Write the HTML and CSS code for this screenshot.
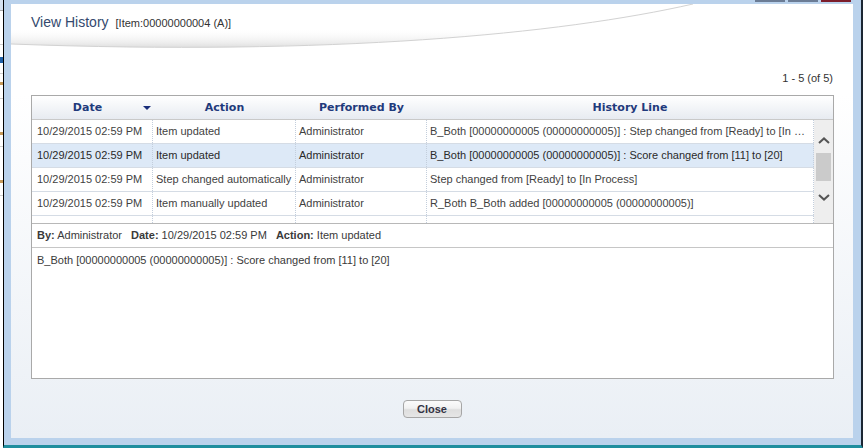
FILE: index.html
```html
<!DOCTYPE html>
<html lang="en">
<head>
<meta charset="utf-8">
<title>View History</title>
<link rel="stylesheet" href="styles.css">
</head>
<body>
<div class="screen">
  <div class="bgpage"></div>
  <div class="window">
    <div class="caption-btns"><span></span><span></span><span class="x"></span></div>
    <div class="dialog">
      <div class="dlg-header">
        <svg class="swoosh" viewBox="0 0 842 52" preserveAspectRatio="none" aria-hidden="true">
          <defs>
            <linearGradient id="sw" x1="0" y1="24" x2="0" y2="46" gradientUnits="userSpaceOnUse">
              <stop offset="0" stop-color="#ffffff" stop-opacity="0"/>
              <stop offset="1" stop-color="#d6d6d6"/>
            </linearGradient>
          </defs>
          <path d="M0,20 C220,26 420,22 550,0 L682,0 C550,30 320,52 0,40 Z" fill="url(#sw)"/>
          <path d="M0,40 C320,52 550,30 682,0" fill="none" stroke="#d2d2d2" stroke-width="1"/>
        </svg>
        <h1 class="title">View History<span class="sub">[Item:00000000004 (A)]</span></h1>
      </div>
      <div class="pager">1 - 5 (of 5)</div>
      <div class="grid">
        <div class="grid-head">
          <div class="hcell hdate">Date<span class="sort-arrow"></span></div>
          <div class="hcell">Action</div>
          <div class="hcell">Performed By</div>
          <div class="hcell">History Line</div>
        </div>
        <div class="grid-body">
          <div class="rows">
            <div class="row">
              <div class="cell c-date">10/29/2015 02:59 PM</div>
              <div class="cell">Item updated</div>
              <div class="cell">Administrator</div>
              <div class="cell">B_Both [00000000005 (00000000005)] : Step changed from [Ready] to [In Process]</div>
            </div>
            <div class="row selected">
              <div class="cell c-date">10/29/2015 02:59 PM</div>
              <div class="cell">Item updated</div>
              <div class="cell">Administrator</div>
              <div class="cell">B_Both [00000000005 (00000000005)] : Score changed from [11] to [20]</div>
            </div>
            <div class="row">
              <div class="cell c-date">10/29/2015 02:59 PM</div>
              <div class="cell">Step changed automatically</div>
              <div class="cell">Administrator</div>
              <div class="cell">Step changed from [Ready] to [In Process]</div>
            </div>
            <div class="row">
              <div class="cell c-date">10/29/2015 02:59 PM</div>
              <div class="cell">Item manually updated</div>
              <div class="cell">Administrator</div>
              <div class="cell">R_Both B_Both added [00000000005 (00000000005)]</div>
            </div>
            <div class="row partial">
              <div class="cell"></div>
              <div class="cell"></div>
              <div class="cell"></div>
              <div class="cell"></div>
            </div>
          </div>
          <div class="vscroll">
            <svg class="chev up" width="12" height="7" viewBox="0 0 12 7" aria-hidden="true"><path d="M1,6 L6,1.4 L11,6" fill="none" stroke="#555" stroke-width="2"/></svg>
            <div class="thumb"></div>
            <svg class="chev down" width="12" height="7" viewBox="0 0 12 7" aria-hidden="true"><path d="M1,1 L6,5.6 L11,1" fill="none" stroke="#555" stroke-width="2"/></svg>
          </div>
        </div>
        <div class="detail-bar">
          <span class="grp"><b>By:</b> Administrator</span>
          <span class="grp"><b>Date:</b> 10/29/2015 02:59 PM</span>
          <span class="grp"><b>Action:</b> Item updated</span>
        </div>
        <div class="detail-text">B_Both [00000000005 (00000000005)] : Score changed from [11] to [20]</div>
      </div>
      <div class="actions"><button class="btn" type="button">Close</button></div>
    </div>
  </div>
</div>
</body>
</html>
```

FILE: styles.css
```css
html, body {
  margin: 0;
  padding: 0;
  width: 863px;
  height: 448px;
  overflow: hidden;
}

body {
  background: #ffffff;
  font-family: "Liberation Sans", Arial, sans-serif;
  font-size: 11px;
  color: #3f3f3f;
}

.screen {
  display: flex;
  width: 863px;
  height: 448px;
}

.bgpage {
  width: 3px;
  flex: none;
  background:
    linear-gradient(#d6e2f0 0 10px, #a8a8a8 10px 11px, #ffffff 11px 44px, #d0d0d0 44px 45px,
      #ffffff 45px 57px, #1f5fa6 57px 63px, #ffffff 63px 73px, #d0d0d0 73px 74px,
      #ffffff 74px 82px, #c79a5a 82px 85px, #ffffff 85px 98px, #d0d0d0 98px 99px,
      #ffffff 99px 132px, #c79a5a 132px 135px, #ffffff 135px 146px, #d0d0d0 146px 147px,
      #ffffff 147px 180px, #c79a5a 180px 183px, #ffffff 183px 195px, #d0d0d0 195px 196px,
      #ffffff 196px 100%);
}

.window {
  position: relative;
  flex: 1;
  display: flex;
  flex-direction: column;
  border-left: 1px solid #000000;
  border-right: 2px solid #1b2633;
  border-bottom: 3px solid #1f8e9e;
  background: #bad2ec;
  padding: 4px 8px 7px 7px;
}

.caption-btns {
  position: absolute;
  top: 0;
  right: 10px;
  display: flex;
  gap: 3px;
}

.caption-btns span {
  width: 30px;
  height: 2px;
  background: #6b7c95;
}

.caption-btns .x {
  background: #7c1d2b;
}

.dialog {
  flex: 1;
  display: flex;
  flex-direction: column;
  background: linear-gradient(#ffffff 0, #ffffff 90px, #eaeff5 100%);
}

.dlg-header {
  position: relative;
  height: 52px;
  box-sizing: border-box;
  padding: 9px 20px 0;
}

.swoosh {
  position: absolute;
  left: 0;
  top: 0;
  width: 842px;
  height: 52px;
}

.title {
  position: relative;
  margin: 0;
  font-family: "Liberation Sans", Arial, sans-serif;
  font-weight: normal;
  font-size: 14px;
  line-height: 18px;
  color: #34496e;
}

.sub {
  font-size: 11px;
  color: #333333;
  margin-left: 7px;
}

.pager {
  height: 39px;
  box-sizing: border-box;
  padding: 15px 20px 0 0;
  text-align: right;
  font-size: 11px;
  line-height: 14px;
  color: #333333;
}

.grid {
  margin: 0 19px 0 20px;
  height: 284px;
  box-sizing: border-box;
  border: 1px solid #a9a9a9;
  background: #ffffff;
  display: flex;
  flex-direction: column;
}

.grid-head {
  display: grid;
  grid-template-columns: 121px 143px 131px 1fr;
  height: 24px;
  box-sizing: border-box;
  border-bottom: 1px solid #c9c9c9;
  background: linear-gradient(#ffffff, #e7ebf1);
}

.hcell {
  text-align: center;
  font-family: "DejaVu Sans", Verdana, sans-serif;
  font-weight: bold;
  font-size: 11px;
  line-height: 23px;
  color: #1f3a7c;
  white-space: nowrap;
}

.hdate {
  position: relative;
  padding-right: 10px;
}

.sort-arrow {
  position: absolute;
  right: 2px;
  top: 10px;
  width: 0;
  height: 0;
  border-left: 4px solid transparent;
  border-right: 4px solid transparent;
  border-top: 4px solid #1a2e7a;
}

.grid-body {
  display: flex;
  height: 103px;
}

.rows {
  width: 782px;
  flex: none;
  display: flex;
  flex-direction: column;
}

.row {
  display: grid;
  grid-template-columns: 121px 143px 131px 387px;
  height: 24px;
  box-sizing: border-box;
  border-bottom: 1px solid #d5dce5;
}

.row.selected {
  background: #dde9f7;
  color: #2a2a2a;
}

.row.partial {
  height: 7px;
  border-bottom: none;
}

.cell {
  box-sizing: border-box;
  border-right: 1px dotted #c3cedc;
  padding: 0 3px;
  line-height: 23px;
  white-space: nowrap;
  overflow: hidden;
  text-overflow: ellipsis;
}

.cell.c-date {
  padding-left: 5px;
}

.vscroll {
  width: 19px;
  flex: none;
  background: #eeeeee;
  display: flex;
  flex-direction: column;
  align-items: center;
  padding-top: 17px;
  box-sizing: border-box;
}

.chev {
  display: block;
  flex: none;
}

.thumb {
  width: 15px;
  height: 28px;
  margin: 9px 0 13px;
  background: #cbcbcb;
}

.detail-bar {
  height: 25px;
  box-sizing: border-box;
  border-top: 1px solid #b8b8b8;
  border-bottom: 1px solid #c6c6c6;
  padding-left: 5px;
  line-height: 23px;
  color: #3a3a3a;
  white-space: nowrap;
}

.detail-bar .grp + .grp {
  margin-left: 6px;
}

.detail-bar b {
  font-weight: bold;
}

.detail-text {
  flex: 1;
  padding: 5px 5px;
  line-height: 14px;
  color: #3a3a3a;
}

.actions {
  flex: 1;
  display: flex;
  justify-content: center;
  align-items: flex-start;
  padding-top: 21px;
}

.btn {
  width: 59px;
  height: 18px;
  padding: 0;
  box-sizing: border-box;
  border: 1px solid #a6a6a6;
  border-radius: 4px;
  background: linear-gradient(#fbfbfb 0%, #f1f1f1 45%, #dedede 55%, #e6e6e6 100%);
  font-family: "Liberation Sans", Arial, sans-serif;
  font-weight: bold;
  font-size: 11px;
  line-height: 16px;
  color: #333344;
  cursor: pointer;
}
```
